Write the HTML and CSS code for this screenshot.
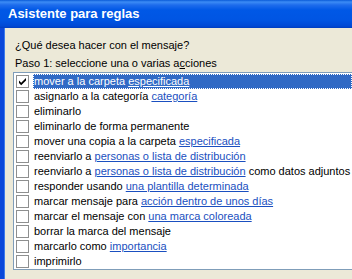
FILE: index.html
```html
<!DOCTYPE html>
<html lang="es">
<head>
<meta charset="utf-8">
<link rel="stylesheet" href="styles.css">
</head>
<body>
<div class="window">
  <div class="titlebar">Asistente para reglas</div>
  <div class="content">
    <div class="label q">¿Qué desea hacer con el mensaje?</div>
    <div class="label">Paso 1: seleccione una o varias a<u>c</u>ciones</div>
    <div class="list">
      <div class="row sel"><span class="cb checked"><svg viewBox="0 0 13 13" width="13" height="13"><path d="M3 5.5 L5.2 7.8 L10 3 L10 5.5 L5.2 10.3 L3 8 Z" fill="#000"/></svg></span><span class="txt">mover a la carpeta <span class="lnk">especificada</span></span></div>
      <div class="row"><span class="cb"></span><span class="txt">asignarlo a la categoría <span class="lnk">categoría</span></span></div>
      <div class="row"><span class="cb"></span><span class="txt">eliminarlo</span></div>
      <div class="row"><span class="cb"></span><span class="txt">eliminarlo de forma permanente</span></div>
      <div class="row"><span class="cb"></span><span class="txt">mover una copia a la carpeta <span class="lnk">especificada</span></span></div>
      <div class="row"><span class="cb"></span><span class="txt">reenviarlo a <span class="lnk">personas o lista de distribución</span></span></div>
      <div class="row"><span class="cb"></span><span class="txt">reenviarlo a <span class="lnk">personas o lista de distribución</span> como datos adjuntos</span></div>
      <div class="row"><span class="cb"></span><span class="txt">responder usando <span class="lnk">una plantilla determinada</span></span></div>
      <div class="row"><span class="cb"></span><span class="txt">marcar mensaje para <span class="lnk">acción dentro de unos días</span></span></div>
      <div class="row"><span class="cb"></span><span class="txt">marcar el mensaje con <span class="lnk">una marca coloreada</span></span></div>
      <div class="row"><span class="cb"></span><span class="txt">borrar la marca del mensaje</span></div>
      <div class="row"><span class="cb"></span><span class="txt">marcarlo como <span class="lnk">importancia</span></span></div>
      <div class="row"><span class="cb"></span><span class="txt">imprimirlo</span></div>
    </div>
  </div>
</div>
</body>
</html>
```
FILE: styles.css
```css
html, body {
  margin: 0;
  padding: 0;
  width: 352px;
  height: 279px;
  overflow: hidden;
  background: #ECE9D8;
}
.window {
  width: 352px;
  height: 279px;
  display: flex;
  flex-direction: column;
  font-family: "Liberation Sans", sans-serif;
  font-size: 11px;
  color: #000;
}
.titlebar {
  height: 28px;
  flex: none;
  box-sizing: border-box;
  padding: 6px 0 0 8px;
  color: #fff;
  font-family: "Liberation Sans", sans-serif;
  font-weight: bold;
  font-size: 13px;
  background: linear-gradient(to bottom, #0A5BD8 0px, #3C8CF5 2px, #1E6CEC 5px, #0058E6 10px, #0055E3 20px, #0049D5 26px, #003DC0 28px);
}
.content {
  flex: 1;
  border-left: 4px solid #0B48DA;
  padding: 9px 0 0 11px;
  box-shadow: inset 1px 0 0 #3D7BEB;
}
.label {
  height: 17px;
  line-height: 17px;
}
.q { margin-bottom: 1px; }
.list {
  margin-left: -2px;
  border: 1px solid #7F9DB9;
  border-right: none;
  background: #fff;
  padding: 1px 0 0 1px;
  height: 195px;
}
.row {
  height: 15px;
  display: flex;
  align-items: center;
  white-space: nowrap;
}
.cb {
  width: 11px;
  height: 11px;
  border: 1px solid #8E8F8F;
  background: #fff;
  margin: 0 4px 0 1px;
  flex: none;
  display: flex;
}
.txt {
  height: 15px;
  line-height: 15px;
  padding: 0 1px;
}
.lnk {
  color: #1A4FC0;
  text-decoration: underline;
}
.sel .txt {
  flex: 1;
  background: #316AC5;
  color: #fff;
  outline: 1px dotted #fff;
  outline-offset: -1px;
}
.sel .lnk { color: #fff; }
.cb svg { margin: -1px; }
```
